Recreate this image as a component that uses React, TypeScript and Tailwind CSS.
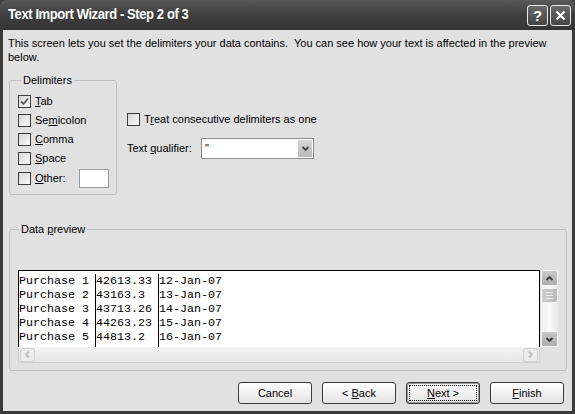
import React from 'react';

const Check: React.FC<{ checked?: boolean }> = ({ checked }) => (
  <span className="w-[13px] h-[13px] shrink-0 border border-[#3c3c3c] bg-gradient-to-br from-[#d6d6d6] to-[#fafafa] flex items-center justify-center">
    {checked && (
      <svg width="9" height="9" viewBox="0 0 9 9">
        <path d="M1 4.5 L3.5 7 L8 1.5" fill="none" stroke="#5a5a5a" strokeWidth="1.8" />
      </svg>
    )}
  </span>
);

const Chevron: React.FC<{ dir: 'up' | 'down' | 'left' | 'right'; color?: string }> = ({ dir, color = '#3a3a3a' }) => {
  const paths = {
    up: 'M1.5 6 L4.5 3 L7.5 6',
    down: 'M1.5 3 L4.5 6 L7.5 3',
    left: 'M6 1.5 L3 4.5 L6 7.5',
    right: 'M3 1.5 L6 4.5 L3 7.5',
  };
  return (
    <svg width="9" height="9" viewBox="0 0 9 9">
      <path d={paths[dir]} fill="none" stroke={color} strokeWidth="1.8" />
    </svg>
  );
};

const rows = [
  ['Purchase 1', '42613.33', '12-Jan-07'],
  ['Purchase 2', '43163.3', '13-Jan-07'],
  ['Purchase 3', '43713.26', '14-Jan-07'],
  ['Purchase 4', '44263.23', '15-Jan-07'],
  ['Purchase 5', '44813.2', '16-Jan-07'],
];

export default function App() {
  const delimiters = [
    { pre: '', key: 'T', post: 'ab', checked: true },
    { pre: 'Se', key: 'm', post: 'icolon' },
    { pre: '', key: 'C', post: 'omma' },
    { pre: '', key: 'S', post: 'pace' },
  ];

  return (
    <div className="w-[575px] h-[414px] bg-[#3b3b3b] flex flex-col font-['Liberation_Sans',Arial,sans-serif] select-none">
      {/* Title bar */}
      <div className="h-[30px] shrink-0 flex items-center pl-[8px] pr-[4px] bg-gradient-to-b from-[#5a5a5a] via-[#3e3e3e] to-[#353535] rounded-t-[6px]">
        <span className="text-white font-bold text-[13px] tracking-[-0.4px] scale-y-110">Text Import Wizard - Step 2 of 3</span>
        <div className="ml-auto flex gap-[2px]">
          <div className="w-[21px] h-[21px] rounded-[3px] border border-[#e8e8e8] bg-gradient-to-b from-[#6a6a6a] to-[#454545] flex items-center justify-center text-white font-bold text-[15px] leading-none">
            ?
          </div>
          <div className="w-[21px] h-[21px] rounded-[3px] border border-[#e8e8e8] bg-gradient-to-b from-[#6a6a6a] to-[#454545] flex items-center justify-center">
            <svg width="11" height="11" viewBox="0 0 11 11">
              <path d="M1.5 1.5 L9.5 9.5 M9.5 1.5 L1.5 9.5" stroke="#fff" strokeWidth="2.2" />
            </svg>
          </div>
        </div>
      </div>

      {/* Body */}
      <div className="flex-1 mx-[3px] mb-[3px] bg-[#e1e1e1] flex flex-col text-[11px] text-black">
        <p className="ml-[5px] mr-[18px] mt-[6px] leading-[14px]">
          This screen lets you set the delimiters your data contains.&nbsp; You can see how your text is affected in the preview below.
        </p>

        <div className="flex ml-[6px] mt-[9px]">
          <fieldset className="w-[108px] border border-[#bdbdbd] rounded-[3px] pl-[8px] pr-[7px] pt-[5px] pb-[6px]">
            <legend className="px-[2px] ml-[3px] leading-[14px]">Delimiters</legend>
            {delimiters.map((d) => (
              <div key={d.post} className="h-[19px] flex items-center gap-[4px]">
                <Check checked={d.checked} />
                <span>
                  {d.pre}
                  <span className="underline">{d.key}</span>
                  {d.post}
                </span>
              </div>
            ))}
            <div className="h-[20px] flex items-center gap-[4px]">
              <Check />
              <span>
                <span className="underline">O</span>ther:
              </span>
              <div className="ml-auto w-[30px] h-[19px] border border-[#9a9a9a] bg-white" />
            </div>
          </fieldset>

          <div className="ml-[10px] pt-[38px] flex flex-col">
            <div className="h-[17px] flex items-center gap-[4px]">
              <Check />
              <span>
                T<span className="underline">r</span>eat consecutive delimiters as one
              </span>
            </div>
            <div className="mt-[10px] flex items-center">
              <span className="w-[74px]">
                Text <span className="underline">q</span>ualifier:
              </span>
              <div className="w-[113px] h-[21px] border border-[#8c8c8c] bg-white flex items-center">
                <span className="pl-[3px] flex-1">"</span>
                <div className="w-[16px] h-[19px] bg-gradient-to-b from-[#d8d8d8] to-[#b8b8b8] flex items-center justify-center border border-white">
                  <Chevron dir="down" color="#444" />
                </div>
              </div>
            </div>
          </div>
        </div>

        {/* Data preview */}
        <fieldset className="mx-[6px] mt-[27px] border border-[#bdbdbd] rounded-[3px] pl-[8px] pr-[8px] pt-[34px] pb-[7px]">
          <legend className="px-[2px] ml-[1px] leading-[14px]">
            Data <span className="underline">p</span>review
          </legend>
          <div className="flex">
            <div className="w-[522px] flex flex-col">
              <div className="h-[77px] border-t border-x border-black bg-white flex font-['Liberation_Mono','Courier_New',monospace] text-[11.67px] leading-[14px] pt-[3px] overflow-hidden">
                <div className="w-[77px] border-r border-black">
                  {rows.map((r) => (
                    <div key={r[0]}>{r[0]}</div>
                  ))}
                </div>
                <div className="w-[63px] border-r border-black">
                  {rows.map((r) => (
                    <div key={r[0]}>{r[1]}</div>
                  ))}
                </div>
                <div className="flex-1">
                  {rows.map((r) => (
                    <div key={r[0]}>{r[2]}</div>
                  ))}
                </div>
              </div>
              <div className="h-[16px] bg-gradient-to-b from-[#f4f4f4] to-[#e6e6e6] border-x border-b border-[#cfcfcf] flex items-center justify-between px-[1px]">
                <div className="w-[15px] h-[14px] rounded-[2px] border border-[#d0d0d0] bg-[#ececec] flex items-center justify-center">
                  <Chevron dir="left" color="#bdbdbd" />
                </div>
                <div className="w-[15px] h-[14px] rounded-[2px] border border-[#d0d0d0] bg-[#ececec] flex items-center justify-center">
                  <Chevron dir="right" color="#bdbdbd" />
                </div>
              </div>
            </div>
            <div className="ml-[1px] w-[17px] h-[77px] bg-gradient-to-r from-[#efefef] via-[#fafafa] to-[#e8e8e8] flex flex-col">
              <div className="h-[16px] rounded-[2px] border border-[#f4f4f4] bg-gradient-to-b from-[#c8c8c8] to-[#aeaeae] flex items-center justify-center">
                <Chevron dir="up" />
              </div>
              <div className="mt-[2px] h-[15px] rounded-[2px] border border-[#f4f4f4] bg-gradient-to-r from-[#cfcfcf] to-[#b9b9b9] flex flex-col items-center justify-center gap-[2px]">
                <div className="w-[7px] h-px bg-[#f0f0f0]" />
                <div className="w-[7px] h-px bg-[#f0f0f0]" />
                <div className="w-[7px] h-px bg-[#f0f0f0]" />
              </div>
              <div className="mt-auto h-[16px] rounded-[2px] border border-[#f4f4f4] bg-gradient-to-b from-[#c8c8c8] to-[#aeaeae] flex items-center justify-center">
                <Chevron dir="down" />
              </div>
            </div>
          </div>
        </fieldset>

        {/* Buttons */}
        <div className="mt-[11px] mr-[8px] flex justify-end gap-[10px]">
          <button className="w-[74px] h-[22px] rounded-[3px] border border-[#3a3a3a] bg-gradient-to-b from-[#ffffff] to-[#e4e4e4] text-[11px]">
            Cancel
          </button>
          <button className="w-[74px] h-[22px] rounded-[3px] border border-[#3a3a3a] bg-gradient-to-b from-[#ffffff] to-[#e4e4e4] text-[11px]">
            &lt; <span className="underline">B</span>ack
          </button>
          <button className="w-[74px] h-[22px] rounded-[3px] border border-[#3a3a3a] bg-gradient-to-b from-[#ffffff] to-[#e4e4e4] text-[11px] p-[2px] shadow-[inset_0_0_0_1px_#9a9a9a]">
            <div className="w-full h-full border border-dotted border-black flex items-center justify-center">
              <span>
                <span className="underline">N</span>ext &gt;
              </span>
            </div>
          </button>
          <button className="w-[74px] h-[22px] rounded-[3px] border border-[#3a3a3a] bg-gradient-to-b from-[#ffffff] to-[#e4e4e4] text-[11px]">
            <span className="underline">F</span>inish
          </button>
        </div>
      </div>
    </div>
  );
}
